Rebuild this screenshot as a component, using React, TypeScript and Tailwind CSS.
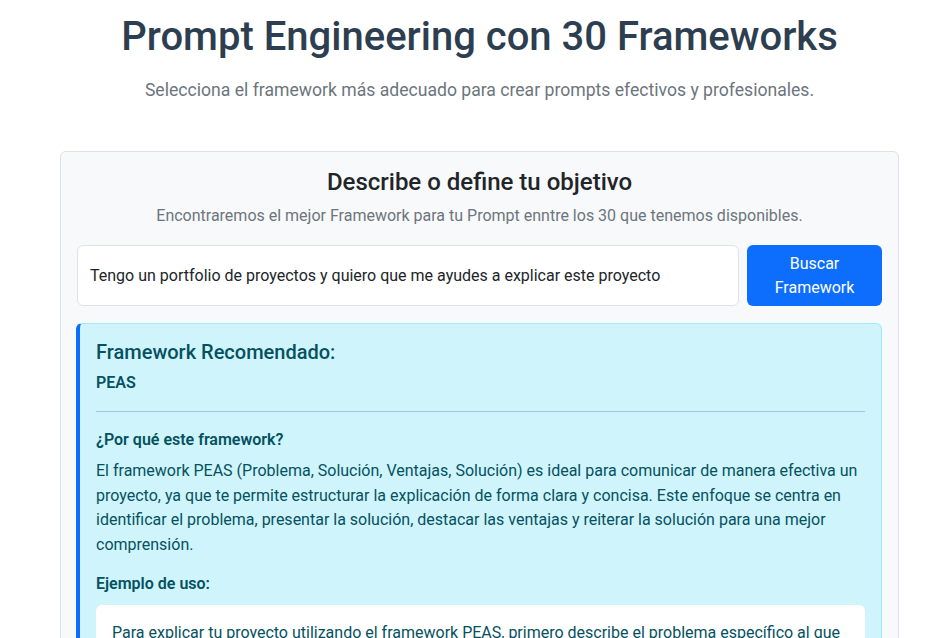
export default function App() {
  return (
    <div className="min-h-screen bg-white text-[#212529]" style={{ fontFamily: 'Roboto, "Liberation Sans", sans-serif' }}>
      <div className="ml-[60px] w-[839px] pt-[13px]">
        <h1 className="text-center text-[40px] font-medium leading-[48px] text-[#2c3e50]">Prompt Engineering con 30 Frameworks</h1>
        <p className="mt-[16px] text-center text-[17.6px] leading-[27px] text-[#6c757d]">
          Selecciona el framework más adecuado para crear prompts efectivos y profesionales.
        </p>
        <div className="mt-[47px] rounded-[6px] border border-[#dee2e6] bg-[#f8f9fa] px-4 pt-4 pb-4">
          <h2 className="text-center text-[24px] font-medium leading-[29px] text-[#212529]">Describe o define tu objetivo</h2>
          <p className="mt-[7px] text-center text-[16px] leading-[24px] text-[#6c757d]">
            Encontraremos el mejor Framework para tu Prompt enntre los 30 que tenemos disponibles.
          </p>
          <div className="mt-[17px] flex gap-2">
            <div className="flex h-[61px] flex-1 items-center rounded-[6px] border border-[#dee2e6] bg-white px-3 text-[16px] text-[#212529]">
              Tengo un portfolio de proyectos y quiero que me ayudes a explicar este proyecto
            </div>
            <button className="h-[61px] w-[135px] rounded-[6px] bg-[#0d6efd] text-[16px] leading-[24px] text-white">
              Buscar<br />Framework
            </button>
          </div>
          <div className="mt-[17px] -ml-px rounded-[6px] border border-[#9eeaf9] border-l-4 border-l-[#0d6efd] bg-[#cff4fc] px-4 pt-4 pb-4 text-[#055160]">
            <h3 className="text-[20px] font-medium leading-[24px]">Framework Recomendado:</h3>
            <p className="mt-[7px] text-[16px] font-semibold leading-[24px]">PEAS</p>
            <hr className="mt-[16px] border-t border-[#055160]/25" />
            <h4 className="mt-[16px] text-[16px] font-semibold leading-[24px]">¿Por qué este framework?</h4>
            <p className="mt-[7px] text-[16px] leading-[24.5px]">
              El framework PEAS (Problema, Solución, Ventajas, Solución) es ideal para comunicar de manera efectiva un proyecto, ya que te permite estructurar la explicación de forma clara y concisa. Este enfoque se centra en identificar el problema, presentar la solución, destacar las ventajas y reiterar la solución para una mejor comprensión.
            </p>
            <h4 className="mt-[15px] text-[16px] font-semibold leading-[24px]">Ejemplo de uso:</h4>
            <div className="mt-[9px] rounded-[6px] bg-white p-4 text-[16px] leading-[24px]">
              Para explicar tu proyecto utilizando el framework PEAS, primero describe el problema específico al que se enfrentaba tu proyecto. Luego, presenta la solución que implementaste, destaca las ventajas que ofrece y finalmente reitera la solución para reforzar el mensaje.
            </div>
          </div>
        </div>
      </div>
    </div>
  );
}
